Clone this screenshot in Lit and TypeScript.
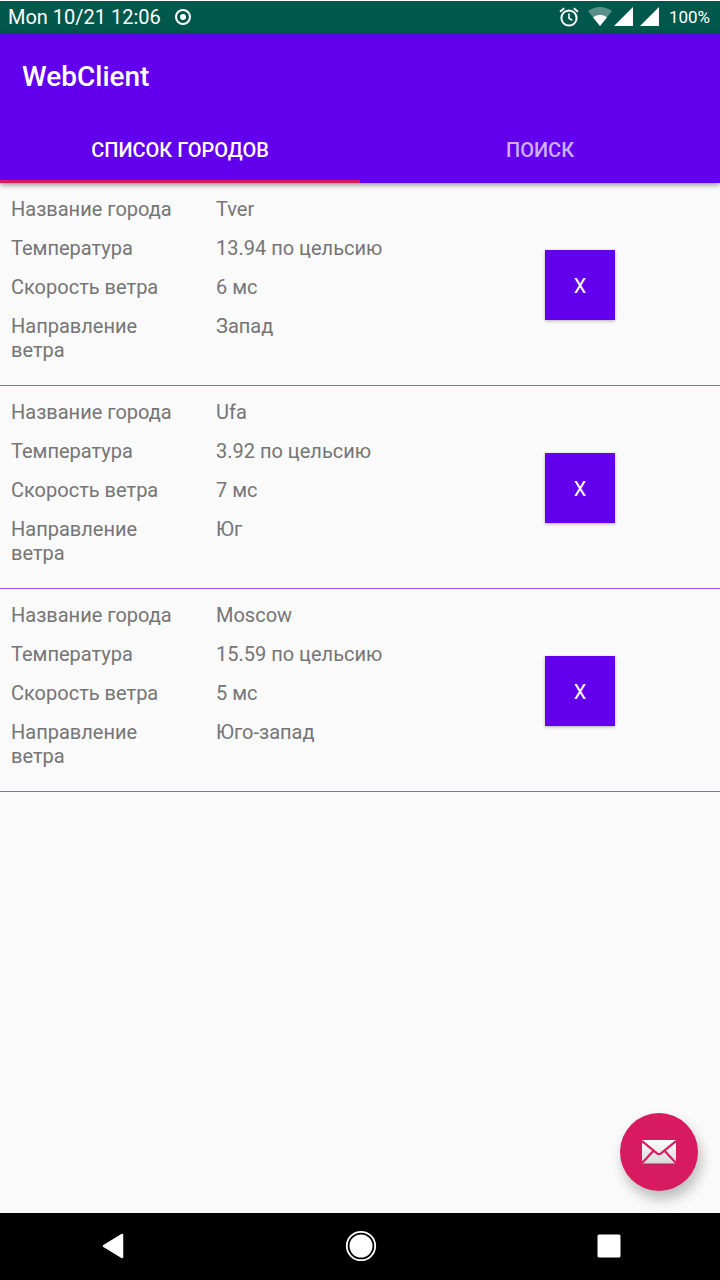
import { LitElement, html, css } from "lit";
import { customElement, property, state } from "lit/decorators.js";

interface City {
  name: string;
  temperature: string;
  wind: string;
  direction: string;
}

@customElement("status-bar")
export class StatusBar extends LitElement {
  static styles = css`
    :host {
      display: flex;
      align-items: center;
      justify-content: space-between;
      height: 32px;
      padding: 0 10px 0 8px;
      border-top: 1px solid #fff;
      background: #00574b;
      color: #fff;
      font-size: 20px;
      line-height: 32px;
    }
    .side {
      display: flex;
      align-items: center;
    }
    .record {
      margin-left: 13px;
    }
    .wifi {
      margin: 0 2px 0 9px;
    }
    .signal {
      margin-right: 6px;
    }
    .battery {
      font-size: 17px;
      margin-left: 3px;
    }
    svg {
      display: block;
    }
  `;

  private signal() {
    return html`<svg class="signal" width="20" height="20" viewBox="0 0 20 20">
      <path d="M0 19L19 0V19Z" fill="#fff" />
    </svg>`;
  }

  render() {
    return html`
      <div class="side">
        <span>Mon 10/21 12:06</span>
        <svg class="record" width="18" height="18" viewBox="0 0 18 18">
          <circle cx="9" cy="9" r="7" fill="none" stroke="#fff" stroke-width="2" />
          <circle cx="9" cy="9" r="3" fill="#fff" />
        </svg>
      </div>
      <div class="side">
        <svg width="20" height="20" viewBox="0 0 20 20" fill="none" stroke="#fff" stroke-width="2">
          <circle cx="10" cy="11" r="7.6" />
          <path d="M10 6.5V11.2L13.3 13.4" stroke-width="1.6" />
          <path d="M1 4.8L5.2 1.3M19 4.8L14.8 1.3" stroke-width="1.9" />
        </svg>
        <svg class="wifi" width="24" height="20" viewBox="0 0 24 20" fill="#fff">
          <path d="M0 4Q12 -4 24 4L12 19Z" opacity=".35" />
          <path d="M5 10.2Q12 5.2 19 10.2L12 19Z" />
        </svg>
        ${this.signal()}${this.signal()}
        <span class="battery">100%</span>
      </div>
    `;
  }
}

@customElement("city-row")
export class CityRow extends LitElement {
  @property({ attribute: false }) city!: City;

  static styles = css`
    :host {
      display: grid;
      grid-template-columns: 11fr 7fr;
      border-bottom: 1px solid #9f55f4;
    }
    .facts {
      display: grid;
      grid-template-columns: 165px 1fr;
      gap: 15px 40px;
      margin: 0;
      padding: 14px 0 23px 11px;
      color: #757575;
      font-size: 20px;
      line-height: 24px;
    }
    dt,
    dd {
      margin: 0;
    }
    .action {
      display: flex;
      align-items: center;
      justify-content: center;
      padding-top: 2px;
    }
    .remove {
      width: 70px;
      height: 70px;
      padding: 2px 0 0;
      border: 0;
      background: #6200ee;
      color: #fff;
      font: 20px/24px Roboto, sans-serif;
      box-shadow: 0 1px 3px rgba(0, 0, 0, 0.3);
    }
  `;

  private remove() {
    this.dispatchEvent(new CustomEvent("remove-city"));
  }

  render() {
    const c = this.city;
    return html`
      <dl class="facts">
        <dt>Название города</dt>
        <dd>${c.name}</dd>
        <dt>Температура</dt>
        <dd>${c.temperature} по цельсию</dd>
        <dt>Скорость ветра</dt>
        <dd>${c.wind} мс</dd>
        <dt>Направление ветра</dt>
        <dd>${c.direction}</dd>
      </dl>
      <div class="action">
        <button class="remove" @click=${this.remove}>X</button>
      </div>
    `;
  }
}

@customElement("app-root")
export class AppRoot extends LitElement {
  @state() private cities: City[] = [
    { name: "Tver", temperature: "13.94", wind: "6", direction: "Запад" },
    { name: "Ufa", temperature: "3.92", wind: "7", direction: "Юг" },
    { name: "Moscow", temperature: "15.59", wind: "5", direction: "Юго-запад" },
  ];

  static styles = css`
    :host {
      display: flex;
      flex-direction: column;
      min-height: 100vh;
      background: #fafafa;
      font-family: Roboto, sans-serif;
    }
    .header {
      background: #6200ee;
      color: #fff;
      box-shadow: 0 2px 5px rgba(0, 0, 0, 0.4);
      z-index: 1;
    }
    .title {
      margin: 0;
      padding: 27px 22px 23px;
      font-size: 28px;
      line-height: 34px;
      font-weight: 500;
    }
    .tabs {
      display: flex;
    }
    .tab {
      flex: 1;
      height: 66px;
      padding: 3px 0 0;
      border: 0;
      border-bottom: 3px solid transparent;
      background: none;
      color: rgba(255, 255, 255, 0.7);
      font: 500 20px/24px Roboto, sans-serif;
    }
    .tab.active {
      border-color: #d81b60;
      color: #fff;
    }
    .content {
      flex: 1;
      position: relative;
    }
    .fab {
      position: absolute;
      right: 22px;
      bottom: 22px;
      width: 78px;
      height: 78px;
      padding: 0;
      border: 0;
      border-radius: 50%;
      background: #d81b60;
      display: flex;
      align-items: center;
      justify-content: center;
      box-shadow: 3px 8px 13px rgba(0, 0, 0, 0.25);
    }
    .nav {
      display: flex;
      justify-content: space-between;
      height: 67px;
      padding: 0 91px 0 93px;
      background: #000;
    }
    .key {
      display: flex;
      align-items: center;
      justify-content: center;
      width: 40px;
      padding: 0 0 1px;
      border: 0;
      background: none;
    }
    svg {
      display: block;
    }
  `;

  private removeCity(city: City) {
    this.cities = this.cities.filter((c) => c !== city);
  }

  render() {
    return html`
      <status-bar></status-bar>
      <header class="header">
        <h1 class="title">WebClient</h1>
        <div class="tabs" role="tablist">
          <button class="tab active" role="tab" aria-selected="true">СПИСОК ГОРОДОВ</button>
          <button class="tab" role="tab" aria-selected="false">ПОИСК</button>
        </div>
      </header>
      <main class="content">
        ${this.cities.map(
          (city) => html`<city-row .city=${city} @remove-city=${() => this.removeCity(city)}></city-row>`
        )}
        <button class="fab" aria-label="Email">
          <svg width="34" height="26" viewBox="0 0 34 26">
            <defs>
              <linearGradient id="paper" x1="0" y1="0" x2="0" y2="1">
                <stop offset="0" stop-color="#fff" />
                <stop offset="1" stop-color="#d9d9d9" />
              </linearGradient>
            </defs>
            <rect y="2" width="34" height="23.5" rx="1" fill="#8c3058" opacity=".7" />
            <rect y="1" width="34" height="23.5" rx="1" fill="url(#paper)" />
            <path
              d="M0 2L15 14.3Q17 15.8 19 14.3L34 2M0 24L11.3 12M34 24L22.7 12"
              fill="none"
              stroke="#d81b60"
              stroke-width="2.2"
            />
          </svg>
        </button>
      </main>
      <nav class="nav">
        <button class="key" aria-label="Back">
          <svg width="22" height="26" viewBox="0 0 22 26">
            <path d="M2 13L20 2V24Z" fill="#fff" stroke="#fff" stroke-width="2.5" stroke-linejoin="round" />
          </svg>
        </button>
        <button class="key" aria-label="Home">
          <svg width="32" height="32" viewBox="0 0 32 32">
            <circle cx="16" cy="16" r="14.2" fill="none" stroke="#fff" stroke-width="1.8" />
            <circle cx="16" cy="16" r="11.5" fill="#fff" />
          </svg>
        </button>
        <button class="key" aria-label="Recent apps">
          <svg width="24" height="24" viewBox="0 0 24 24">
            <rect x=".5" y=".5" width="23" height="23" rx="1.5" fill="#fff" />
          </svg>
        </button>
      </nav>
    `;
  }
}
